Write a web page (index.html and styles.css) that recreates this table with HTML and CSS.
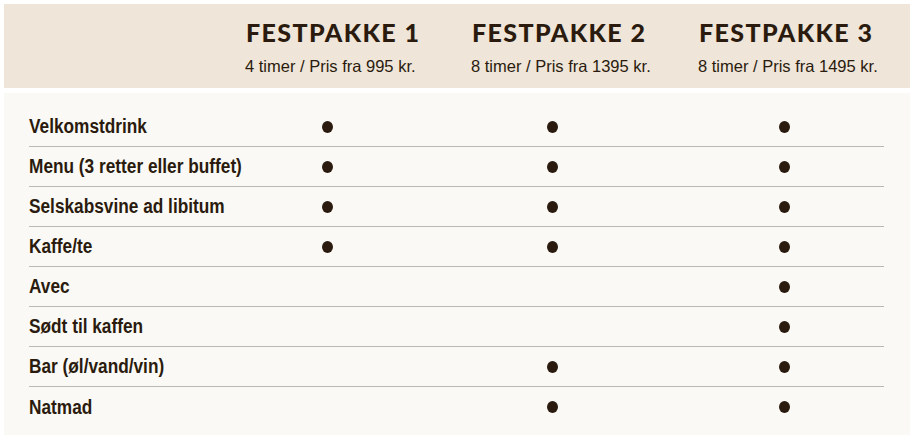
FILE: index.html
```html
<!DOCTYPE html>
<html lang="da">
<head>
<meta charset="utf-8">
<link rel="stylesheet" href="styles.css">
</head>
<body>
<div class="page">
  <header class="head">
    <div class="pkg">
      <h2 class="pkg-title">FESTPAKKE 1</h2>
      <p class="pkg-sub">4 timer / Pris fra 995 kr.</p>
    </div>
    <div class="pkg">
      <h2 class="pkg-title">FESTPAKKE 2</h2>
      <p class="pkg-sub">8 timer / Pris fra 1395 kr.</p>
    </div>
    <div class="pkg">
      <h2 class="pkg-title">FESTPAKKE 3</h2>
      <p class="pkg-sub">8 timer / Pris fra 1495 kr.</p>
    </div>
  </header>
  <section class="table">
    <div class="row"><span class="label">Velkomstdrink</span><span class="cell"><i class="dot"></i></span><span class="cell"><i class="dot"></i></span><span class="cell"><i class="dot"></i></span></div>
    <div class="row"><span class="label">Menu (3 retter eller buffet)</span><span class="cell"><i class="dot"></i></span><span class="cell"><i class="dot"></i></span><span class="cell"><i class="dot"></i></span></div>
    <div class="row"><span class="label">Selskabsvine ad libitum</span><span class="cell"><i class="dot"></i></span><span class="cell"><i class="dot"></i></span><span class="cell"><i class="dot"></i></span></div>
    <div class="row"><span class="label">Kaffe/te</span><span class="cell"><i class="dot"></i></span><span class="cell"><i class="dot"></i></span><span class="cell"><i class="dot"></i></span></div>
    <div class="row"><span class="label">Avec</span><span class="cell"></span><span class="cell"></span><span class="cell"><i class="dot"></i></span></div>
    <div class="row"><span class="label">Sødt til kaffen</span><span class="cell"></span><span class="cell"></span><span class="cell"><i class="dot"></i></span></div>
    <div class="row"><span class="label">Bar (øl/vand/vin)</span><span class="cell"></span><span class="cell"><i class="dot"></i></span><span class="cell"><i class="dot"></i></span></div>
    <div class="row last"><span class="label">Natmad</span><span class="cell"></span><span class="cell"><i class="dot"></i></span><span class="cell"><i class="dot"></i></span></div>
  </section>
</div>
</body>
</html>
```
FILE: styles.css
```css
html, body {
  margin: 0;
  padding: 0;
  background: #ffffff;
}
body {
  padding: 4px 0 0 4px;
  color: #2a1b0e;
}
.page {
  display: flex;
  flex-direction: column;
  gap: 5px;
}
.head {
  background: #efe5d8;
  height: 84px;
  display: grid;
  grid-template-columns: 226px 227px 1fr;
  padding-left: 242px;
  box-sizing: border-box;
}
.pkg {
  padding-top: 13px;
}
.pkg-title {
  margin: 0;
  font-family: Lato, "DejaVu Sans", sans-serif;
  font-weight: 900;
  font-size: 25px;
  line-height: 30px;
  letter-spacing: 1.4px;
  color: #2a1b0e;
}
.pkg-sub {
  margin: 10px 0 0 -1px;
  font-family: "Liberation Sans", Arial, sans-serif;
  font-size: 16.5px;
  line-height: 18px;
  color: #2a1b0e;
}
.table {
  background: #faf9f5;
  padding: 14px 0 8px 25px;
}
.row {
  width: 855px;
  height: 40px;
  display: grid;
  grid-template-columns: 205px 186px 264px 200px;
  align-items: center;
  border-bottom: 1px solid #b8b8b6;
  box-sizing: border-box;
}
.row.last {
  border-bottom: none;
}
.label {
  display: inline-block;
  white-space: nowrap;
  font-family: "Liberation Sans", Arial, sans-serif;
  font-weight: 700;
  font-size: 19.5px;
  color: #2a1b0e;
  transform: scaleX(0.885);
  transform-origin: left center;
}
.cell {
  display: flex;
  justify-content: center;
}
.dot {
  display: block;
  width: 11px;
  height: 12px;
  border-radius: 50%;
  background: #2a1b0e;
}
```
